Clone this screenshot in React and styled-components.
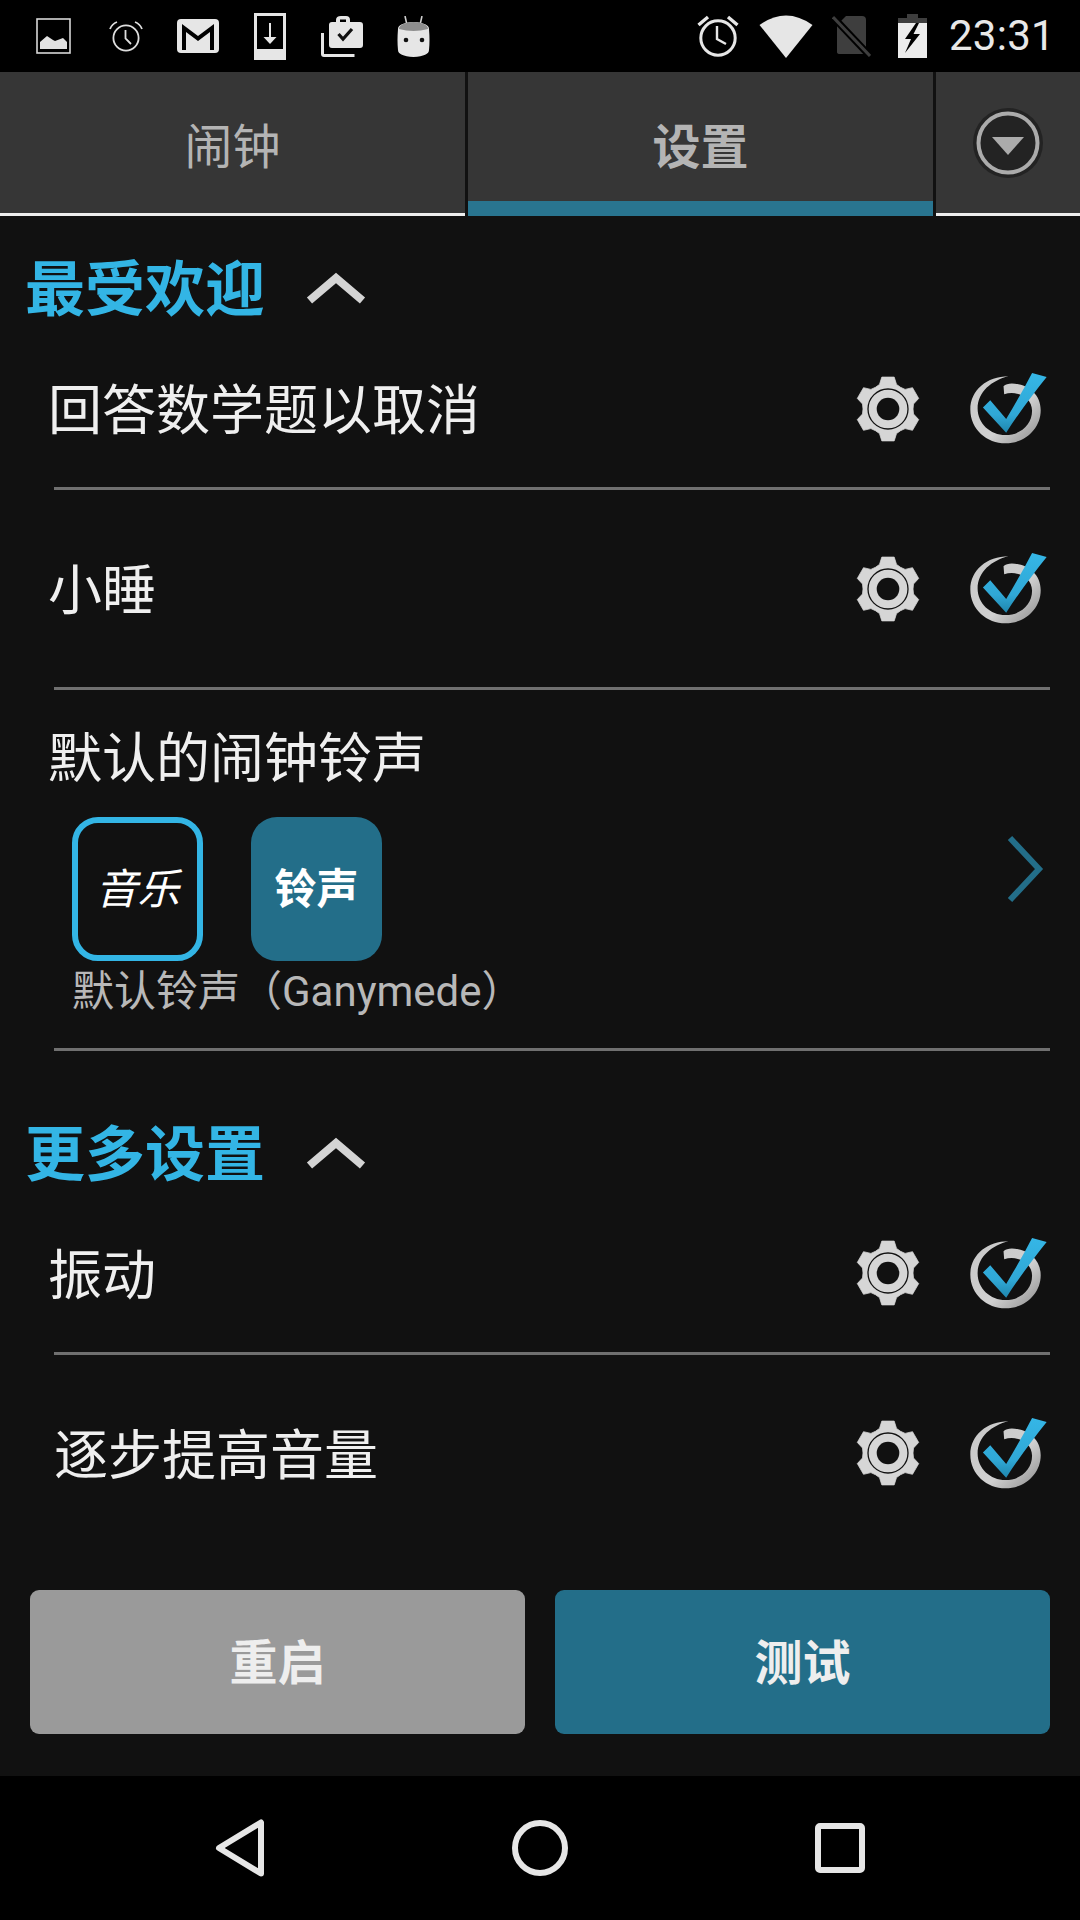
import React from "react";
import styled, { createGlobalStyle } from "styled-components";

const GlobalStyle = createGlobalStyle`
  html, body {
    margin: 0;
    padding: 0;
    background: #000;
  }
  body {
    font-family: Roboto, "Noto Sans CJK SC", sans-serif;
  }
`;

const Screen = styled.div`
  width: 1080px;
  height: 1920px;
  display: flex;
  flex-direction: column;
  background: #111;
  overflow: hidden;
`;

const StatusBar = styled.div`
  height: 72px;
  flex: none;
  background: #000;
  display: flex;
  align-items: center;
  padding: 0 25px 0 17.5px;
`;

const StatusLeft = styled.div`
  display: grid;
  grid-template-columns: repeat(6, 72px);
  justify-items: center;
  align-items: center;
`;

const StatusRight = styled.div`
  margin-left: auto;
  display: grid;
  grid-template-columns: 62px 73px 66px 29px;
  justify-items: start;
  align-items: center;
`;

const Clock = styled.div`
  margin-left: 22px;
  font-size: 42px;
  line-height: 72px;
  color: #e8e8e8;
  letter-spacing: 0.3px;
`;

const Tabs = styled.div`
  height: 144px;
  flex: none;
  display: flex;
  gap: 3px;
  background: #111;
`;

const Tab = styled.div`
  flex: ${(p) => (p.$menu ? "none" : "1")};
  width: ${(p) => (p.$menu ? "144px" : "auto")};
  display: flex;
  align-items: center;
  justify-content: center;
  background: #363636;
  color: #b4b4b4;
  font-size: 48px;
  font-weight: ${(p) => (p.$active ? 700 : 400)};
  border-bottom: ${(p) => (p.$active ? "15px solid #297590" : "3px solid #eee")};
  padding-top: ${(p) => (p.$active ? "12px" : "0")};
  box-sizing: border-box;
`;

const SectionHeader = styled.div`
  display: flex;
  align-items: center;
  gap: 41px;
  height: 72px;
  padding: ${(p) => p.$top}px 0 ${(p) => p.$bottom}px 25px;
`;

const SectionTitle = styled.div`
  color: #33b5e5;
  font-size: 60px;
  font-weight: 700;
  line-height: 72px;
  padding-top: 5px;
`;

const Row = styled.div`
  box-sizing: border-box;
  height: ${(p) => p.$height}px;
  margin: 0 30px 0 54px;
  display: flex;
  align-items: center;
  justify-content: space-between;
  border-bottom: ${(p) => (p.$divider ? "3px solid #707070" : "none")};
`;

const RowTitle = styled.div`
  margin-left: ${(p) => p.$indent ?? -6}px;
  padding-top: 7px;
  color: #efefef;
  font-size: 54px;
  line-height: 70px;
`;

const RowActions = styled.div`
  display: flex;
  align-items: center;
  gap: 46px;
`;

const RingtoneBlock = styled.div`
  box-sizing: border-box;
  height: 361px;
  margin: 0 30px 0 54px;
  position: relative;
  padding-top: 28px;
  border-bottom: 3px solid #707070;
`;

const RingtoneTiles = styled.div`
  display: flex;
  gap: 48px;
  margin: 22px 0 0 18px;
`;

const Tile = styled.div`
  box-sizing: border-box;
  width: 131px;
  height: 144px;
  border-radius: 26px;
  display: flex;
  align-items: center;
  justify-content: center;
  padding-bottom: 8px;
  color: #fff;
  font-size: 42px;
  font-style: ${(p) => (p.$selected ? "italic" : "normal")};
  font-weight: ${(p) => (p.$selected ? 400 : 700)};
  background: ${(p) => (p.$selected ? "#111" : "#236e89")};
  border: ${(p) => (p.$selected ? "6px solid #33b5e5" : "none")};
`;

const Caption = styled.div`
  margin: 2px 0 0 18px;
  color: #b8b8b8;
  font-size: 42px;
  line-height: 58px;
`;

const NextArrow = styled.svg`
  position: absolute;
  right: 6px;
  top: 145px;
`;

const Footer = styled.div`
  margin-top: auto;
  padding: 0 30px 42px;
  display: grid;
  grid-template-columns: 1fr 1fr;
  gap: 30px;
`;

const FooterButton = styled.div`
  box-sizing: border-box;
  height: 144px;
  padding-bottom: 6px;
  border-radius: 9px;
  display: flex;
  align-items: center;
  justify-content: center;
  color: #eee;
  font-size: 48px;
  font-weight: 700;
  background: ${(p) => (p.$primary ? "#236e89" : "#9a9a9a")};
`;

const NavBar = styled.div`
  height: 144px;
  flex: none;
  background: #000;
  display: grid;
  grid-template-columns: repeat(3, 300px);
  justify-content: center;
  justify-items: center;
  align-items: center;
`;

const ChevronUp = () => (
  <svg width="60" height="34" viewBox="0 0 60 34">
    <path d="M3.5 29.5 L30 7 L56.5 29.5" fill="none" stroke="#d4d4d4" strokeWidth="8" />
  </svg>
);

// six teeth, flat top, radii picked off the reference
const gearPoints = [0, 1, 2, 3, 4, 5]
  .flatMap((i) => {
    const a = -90 + i * 60;
    return [
      [a - 30, 25],
      [a - 19, 26],
      [a - 11, 32.5],
      [a + 11, 32.5],
      [a + 19, 26],
    ];
  })
  .map(([deg, r]) => {
    const rad = (deg * Math.PI) / 180;
    return `${(r * Math.cos(rad)).toFixed(1)},${(r * Math.sin(rad)).toFixed(1)}`;
  })
  .join(" ");

const Gear = () => (
  <svg width="66" height="68" viewBox="-33 -34 66 68">
    <polygon points={gearPoints} fill="#d6d6d6" stroke="#d6d6d6" strokeWidth="0.8" strokeLinejoin="round" />
    <circle r="20" fill="none" stroke="#111" strokeWidth="1.3" />
    <circle r="11.3" fill="#111" />
  </svg>
);

const CheckMark = ({ id }) => (
  <svg width="83" height="77" viewBox="440 60 250 230">
    <defs>
      <linearGradient id={`ring${id}`} x1="0" y1="0" x2="1" y2="1">
        <stop offset="0" stopColor="#c8c8c8" />
        <stop offset="0.6" stopColor="#d0d0d0" />
        <stop offset="1" stopColor="#8a8a8a" />
      </linearGradient>
      <linearGradient id={`tick${id}`} x1="0" y1="0" x2="0" y2="1">
        <stop offset="0" stopColor="#35b6e6" />
        <stop offset="0.7" stopColor="#30a8d6" />
        <stop offset="1" stopColor="#1f86ad" />
      </linearGradient>
    </defs>
    <path
      d="M565 78 C500 78 450 120 450 178 C450 238 500 280 556 280 C615 280 662 235 662 180 C662 130 620 100 575 100 C565 100 555 103 550 108 L552 132 C590 120 636 140 636 182 C636 225 600 255 556 255 C510 255 472 220 472 175 C472 125 515 90 565 78 Z"
      fill={`url(#ring${id})`}
    />
    <path
      d="M636 68 L680 80 C640 130 595 190 558 248 L488 172 L510 150 L558 207 C585 160 612 115 636 68 Z"
      fill={`url(#tick${id})`}
    />
  </svg>
);

const ImageIcon = () => (
  <svg width="35" height="36" viewBox="0 0 35 36">
    <rect x="1" y="1" width="33" height="34" fill="none" stroke="#d8d8d8" strokeWidth="1.6" />
    <path d="M4 31 V24 L11 18 L17 22 L19 23 L27 20 L31 24 V31 Z" fill="#e2e2e2" />
  </svg>
);

const SmallAlarm = () => (
  <svg width="34" height="32" viewBox="0 0 34 32">
    <circle cx="17" cy="18" r="12.6" fill="none" stroke="#dedede" strokeWidth="1.8" />
    <path d="M16.5 10 V18.5 L22 24" fill="none" stroke="#dedede" strokeWidth="1.8" />
    <path d="M1 9 Q3 4 8 2 M33 9 Q31 4 26 2" fill="none" stroke="#dedede" strokeWidth="1.8" />
  </svg>
);

const MailIcon = () => (
  <svg width="42" height="34" viewBox="0 0 42 34">
    <rect width="42" height="34" rx="4" fill="#e6e6e6" />
    <path d="M5 31 V5 L21 17 L37 5 V31 H33 V13 L21 22 L9 13 V31 Z" fill="#000" />
  </svg>
);

const DownloadIcon = () => (
  <svg width="32" height="47" viewBox="0 0 32 47">
    <path fillRule="evenodd" d="M0 0 H32 V47 H0 Z M3 3 V36 H29 V3 Z" fill="#e6e6e6" />
    <path d="M16 10 V24" stroke="#e6e6e6" strokeWidth="2" />
    <path d="M9.5 24 H22.5 L16 31 Z" fill="#e6e6e6" />
  </svg>
);

const BriefcaseIcon = () => (
  <svg width="42" height="41" viewBox="0 0 42 41">
    <path d="M1.5 17 V38 Q1.5 39.5 3 39.5 H33.5" fill="none" stroke="#e6e6e6" strokeWidth="3" />
    <path
      fillRule="evenodd"
      d="M15 6 V4 Q15 0 20 0 H25 Q29 0 29 4 V6 H39 Q42 6 42 9 V29 Q42 32 39 32 H11 Q8 32 8 29 V9 Q8 6 11 6 Z M19 6 H25 V3.5 H19 Z"
      fill="#e6e6e6"
    />
    <path d="M17.5 18 L22 23 L31 13" fill="none" stroke="#111" strokeWidth="3.2" />
  </svg>
);

const MarshmallowIcon = () => (
  <svg width="33" height="41" viewBox="0 0 33 41">
    <path d="M8 0 L10 9 M25 0 L23 9" stroke="#cfcfcf" strokeWidth="1.6" />
    <path d="M1 13 Q1 7 16.5 6 Q32 7 32 13 Q33 25 32 34 Q32 40 16.5 41 Q1 40 1 34 Q0 25 1 13 Z" fill="#e6e6e6" />
    <path d="M2 13 Q2 7 16.5 6 Q31 7 31 13 Q16.5 17 2 13 Z" fill="#8e8e8e" />
    <circle cx="9" cy="24" r="2.3" fill="#111" />
    <circle cx="25" cy="24" r="2.3" fill="#111" />
  </svg>
);

const BigAlarm = () => (
  <svg width="42" height="44" viewBox="0 0 42 44">
    <circle cx="21" cy="24" r="17.2" fill="none" stroke="#e6e6e6" strokeWidth="3" />
    <path d="M20 12 V25 L29 30" fill="none" stroke="#e6e6e6" strokeWidth="2.4" />
    <path d="M1.5 11 L11 3 M40.5 11 L31 3" stroke="#e6e6e6" strokeWidth="3.4" />
  </svg>
);

const WifiIcon = () => (
  <svg width="54" height="43" viewBox="0 0 54 43">
    <path d="M0.5 10 Q27 -9 53.5 10 L27 43 Z" fill="#e6e6e6" />
  </svg>
);

const NoSimIcon = () => (
  <svg width="39" height="42" viewBox="0 0 39 42">
    <path d="M14 1 H30 Q34 1 34 5 V37 Q34 39 31 39 H8 Q5 39 5 37 V10 Z" fill="#3e3e3e" />
    <path d="M2 3 L37 40" stroke="#000" strokeWidth="7" />
    <path d="M1 2 L38 41" stroke="#3e3e3e" strokeWidth="3" />
  </svg>
);

const BatteryIcon = () => (
  <svg width="29" height="44" viewBox="0 0 29 44">
    <path d="M9 0 H20 V4 H29 V9 H0 V4 H9 Z" fill="#3e3e3e" />
    <path d="M0 9 H29 V44 H0 Z" fill="#ececec" />
    <path d="M18 9 L7 25 H13 L7 39 L22 20 H15.5 L21 9 Z" fill="#000" />
  </svg>
);

const MenuIcon = () => (
  <svg width="72" height="72" viewBox="-36 -36 72 72">
    <circle r="35" fill="#232323" />
    <circle r="29.5" fill="none" stroke="#ababab" strokeWidth="4" />
    <path d="M-19 -8 H19 L0 14 Z" fill="#232323" />
    <path d="M-16 -6 H16 L0 12 Z" fill="#ababab" />
  </svg>
);

const BackIcon = () => (
  <svg width="50" height="58" viewBox="0 0 50 58">
    <path d="M46 3.5 V54.5 L4 29 Z" fill="none" stroke="#e6e6e6" strokeWidth="6" strokeLinejoin="round" />
  </svg>
);

const HomeIcon = () => (
  <svg width="56" height="56" viewBox="0 0 56 56">
    <circle cx="28" cy="28" r="25" fill="none" stroke="#e6e6e6" strokeWidth="6" />
  </svg>
);

const RecentIcon = () => (
  <svg width="50" height="50" viewBox="0 0 50 50">
    <rect x="3" y="3" width="44" height="44" rx="2" fill="none" stroke="#e6e6e6" strokeWidth="6" />
  </svg>
);

const SettingRow = ({ title, id, height, divider, indent }) => (
  <Row $height={height} $divider={divider}>
    <RowTitle $indent={indent}>{title}</RowTitle>
    <RowActions>
      <Gear />
      <CheckMark id={id} />
    </RowActions>
  </Row>
);

export default function App() {
  return (
    <Screen>
      <GlobalStyle />
      <StatusBar>
        <StatusLeft>
          <ImageIcon />
          <SmallAlarm />
          <MailIcon />
          <DownloadIcon />
          <BriefcaseIcon />
          <MarshmallowIcon />
        </StatusLeft>
        <StatusRight>
          <BigAlarm />
          <WifiIcon />
          <NoSimIcon />
          <BatteryIcon />
        </StatusRight>
        <Clock>23:31</Clock>
      </StatusBar>

      <Tabs>
        <Tab>闹钟</Tab>
        <Tab $active>设置</Tab>
        <Tab $menu>
          <MenuIcon />
        </Tab>
      </Tabs>

      <SectionHeader $top={36} $bottom={6}>
        <SectionTitle>最受欢迎</SectionTitle>
        <ChevronUp />
      </SectionHeader>
      <SettingRow id="a" title="回答数学题以取消" height={160} divider />
      <SettingRow id="b" title="小睡" height={200} divider />
      <RingtoneBlock>
        <RowTitle>默认的闹钟铃声</RowTitle>
        <RingtoneTiles>
          <Tile $selected>音乐</Tile>
          <Tile>铃声</Tile>
        </RingtoneTiles>
        <Caption>默认铃声（Ganymede）</Caption>
        <NextArrow width="38" height="68" viewBox="0 0 38 68">
          <path d="M4 3 L33 34 L4 65" fill="none" stroke="#236e89" strokeWidth="6" />
        </NextArrow>
      </RingtoneBlock>

      <SectionHeader $top={66} $bottom={5}>
        <SectionTitle>更多设置</SectionTitle>
        <ChevronUp />
      </SectionHeader>
      <SettingRow id="c" title="振动" height={161} divider />
      <SettingRow id="d" title="逐步提高音量" height={196} indent={0} />

      <Footer>
        <FooterButton>重启</FooterButton>
        <FooterButton $primary>测试</FooterButton>
      </Footer>

      <NavBar>
        <BackIcon />
        <HomeIcon />
        <RecentIcon />
      </NavBar>
    </Screen>
  );
}
